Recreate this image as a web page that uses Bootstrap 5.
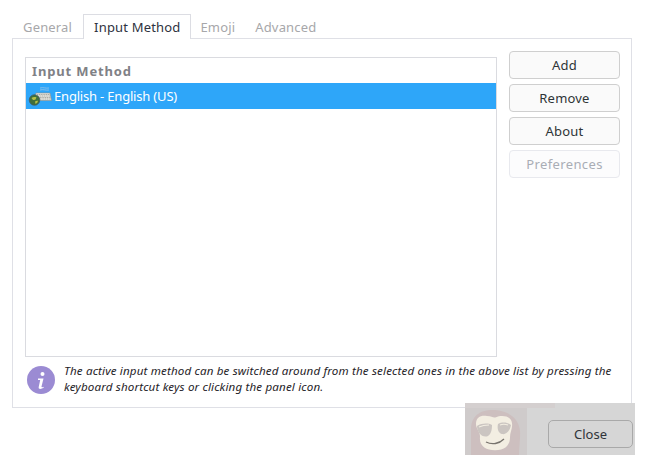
<!DOCTYPE html>
<html lang="en">
<head>
<meta charset="utf-8">
<title>Input Method</title>
<link rel="stylesheet" href="https://cdn.jsdelivr.net/npm/bootstrap@5.3.0/dist/css/bootstrap.min.css">
<style>
html,body{height:100%;margin:0;overflow:hidden}
body{background:#fff;font-family:"Noto Sans",sans-serif;font-size:13px;color:#2e3436;position:relative}
.dlg{padding:14px 12px 0 12px;height:460px}
.tabbar{border:0;gap:0;height:25px;flex-wrap:nowrap}
.tabbar .nav-link{font-size:13px;line-height:18px;padding:4px 10px 3px;color:#a7a7aa;border:0;border-radius:0;background:none;margin:0;height:25px;letter-spacing:.17px}
.tabbar .nav-item:first-child .nav-link{padding-left:11px;padding-right:11px}
.tabbar .nav-item:nth-child(3) .nav-link{padding-left:9px}
.tabbar .nav-link.active{color:#2e3240;border:1px solid #dcdde3;border-bottom:0;background:#fff;position:relative;z-index:2;padding:3px 10px}
.panel{border:1px solid #dfe0e6;height:370px;margin-top:-1px;padding:18px 12px 0 12px;width:620px}
.upper{height:300px;gap:12px}
.imlist{width:472px;height:300px;border:1px solid #dadbe0;background:#fff}
.imhead{height:25px;font-weight:700;color:#808186;padding-left:6px;line-height:27px;letter-spacing:.85px}
.imrow{height:26px;background:#2ea6f9;color:#fff;display:flex;align-items:center;gap:2px;padding-left:2px;letter-spacing:-.19px;line-height:28px}
.btnstack{width:111px;gap:5px;margin-top:-6px}
.gbtn{height:28px;font-size:13px;line-height:1;padding:0;background:#fafafa;border:1px solid #cfcfcf;border-radius:4px;color:#2e3436;width:111px;letter-spacing:.2px}
.gbtn:disabled{opacity:1;background:#fcfcfd;border-color:#e8e9ee;color:#a9adb5;letter-spacing:.38px}
.note{margin-top:5px;gap:9px;align-items:center;padding-left:2px;height:36px}
.notetxt{font-size:11.6px;font-style:italic;line-height:16px;color:#1f2328;width:556px;letter-spacing:.15px;margin-top:-3px}
.wmark{position:absolute;left:465px;top:403px;width:170px;height:52px;background:#d6d6d6;overflow:hidden;z-index:3}
.closebtn{position:absolute;left:548px;top:420px;width:85px;height:28px;z-index:4;background:transparent;border:1px solid #a9a9a9;border-radius:5px;font-size:13px;color:#30343a;padding:0;line-height:1}
</style>
</head>
<body>
<div class="dlg">
  <ul class="nav nav-tabs tabbar">
    <li class="nav-item"><a class="nav-link" href="#">General</a></li>
    <li class="nav-item"><a class="nav-link active" href="#">Input Method</a></li>
    <li class="nav-item"><a class="nav-link" href="#">Emoji</a></li>
    <li class="nav-item"><a class="nav-link" href="#">Advanced</a></li>
  </ul>
  <div class="panel">
    <div class="d-flex upper">
      <div class="imlist flex-shrink-0">
        <div class="imhead">Input Method</div>
        <div class="imrow">
          <svg width="24" height="22" viewBox="0 0 24 22" class="flex-shrink-0">
            <path d="M12 3c3-1 6 .6 9 0M12 5c3-1 6 .6 9 0" fill="none" stroke="#9cc3e4" stroke-width=".8"/>
            <path d="M8 8h14l1.500 7.500H6z" fill="#ecece6" stroke="#8f8f86" stroke-width=".6"/>
            <path d="M9 9.500h13M8.500 11h14M8 12.500h15M8 14h15" stroke="#a5a59d" stroke-width=".9" stroke-dasharray="1.300 .5"/>
            <circle cx="6.500" cy="15" r="5.300" fill="#3f6f3c" stroke="#44586c" stroke-width=".7"/>
            <path d="M3.500 13c1.500-1.300 3.500-1.300 5-.6l-1.200 2.300-2.300.4zM7 16.500l2.500-1 .4 1.600-2.300 1.900z" fill="#b6c04a"/>
          </svg>
          <span>English - English (US)</span>
        </div>
      </div>
      <div class="d-flex flex-column btnstack flex-shrink-0" role="group">
        <button type="button" class="btn gbtn">Add</button>
        <button type="button" class="btn gbtn">Remove</button>
        <button type="button" class="btn gbtn">About</button>
        <button type="button" class="btn gbtn" disabled>Preferences</button>
      </div>
    </div>
    <div class="d-flex note">
      <svg width="28" height="28" viewBox="0 0 28 28" class="flex-shrink-0">
        <circle cx="14" cy="14" r="14" fill="#9b8bd3"/>
        <circle cx="15.500" cy="8" r="2" fill="#fff"/>
        <path d="M11 12.500h5.500l-2 8c-.2.800.5 1 2 .2l.2 1c-2.500 1.600-5.500 1.800-5-.8l1.500-6.900H11z" fill="#fff"/>
      </svg>
      <div class="notetxt">The active input method can be switched around from the selected ones in the above list by pressing the keyboard shortcut keys or clicking the panel icon.</div>
    </div>
  </div>
</div>
<div class="wmark" aria-hidden="true">
  <svg width="170" height="52" viewBox="0 0 170 52">
    <rect width="62" height="52" fill="#cfcbcb"/>
    <rect width="90" height="5" fill="#d4cfcf"/>
    <path d="M6 52V27C6 12 16 6 30 7c13 1 24 8 25 21 .5 8-1 16-1 24z" fill="#cdbfbf"/>
    <path d="M11 21c0-7 5-9 11-8 5 .3 6 2 9 1.200 5-2 15-2 16 6 .8 5-2 9-2 14 0 9-6 13-15 13S14 43 15 34c.4-5-4-8-4-13z" fill="#f3eee2"/>
    <path d="M12 23c5-3 11-3 15-1 0 5-1 10-5 11.500-6 1-10-5-10-10.500zM33 21c4-2 9-2 13 1-1 5-4 10-9 9-4-1-5-6-4-10z" fill="#cbc5c1"/>
    <path d="M14 24c3-1.500 6-2 10-2M35 22c2-.8 5-1 8 0" fill="none" stroke="#f3eee2" stroke-width="1.200"/>
    <path d="M21 39c6 3 13 2 18-3" fill="none" stroke="#77736d" stroke-width="1.300"/>
  </svg>
</div>
<button type="button" class="btn closebtn">Close</button>
<script src="https://cdn.jsdelivr.net/npm/bootstrap@5.3.0/dist/js/bootstrap.bundle.min.js"></script>
</body>
</html>
